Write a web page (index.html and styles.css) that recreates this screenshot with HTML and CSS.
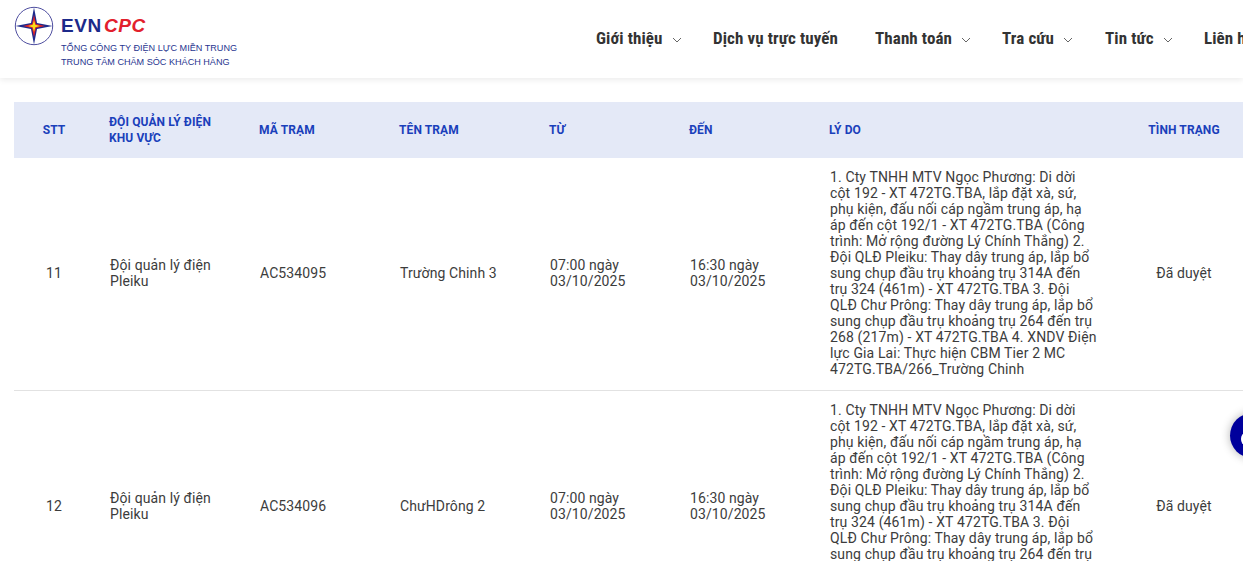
FILE: index.html
```html
<!DOCTYPE html>
<html lang="vi">
<head>
<meta charset="utf-8">
<title>EVNCPC</title>
<link rel="stylesheet" href="styles.css">
</head>
<body>
<header class="site-header">
  <a class="brand" href="#">
    <svg class="brand-mark" viewBox="0 0 40 40" width="40" height="40" aria-hidden="true">
      <circle cx="20" cy="20" r="18.7" fill="#fff" stroke="#3a3a94" stroke-width="0.9"/>
      <polygon points="20,1.5 23,17 38.5,20 23,23 20,38.5 17,23 1.5,20 17,17" fill="#1d2a8c"/>
      <polygon points="20,9 22,18 31,20 22,22 20,31 18,22 9,20 18,18" fill="#e0202a"/>
      <polygon points="20,14 21.3,18.7 26,20 21.3,21.3 20,26 18.7,21.3 14,20 18.7,18.7" fill="#f7e017"/>
    </svg>
    <div class="brand-text">
      <div class="brand-name"><span class="evn">EVN</span><span class="cpc">CPC</span></div>
      <div class="brand-sub">TỔNG CÔNG TY ĐIỆN LỰC MIỀN TRUNG</div>
      <div class="brand-sub">TRUNG TÂM CHĂM SÓC KHÁCH HÀNG</div>
    </div>
  </a>
  <nav class="main-nav">
    <a class="nav-item nav-gioithieu" href="#"><span class="nav-label">Giới thiệu</span><svg class="chev" viewBox="0 0 10 6" width="10" height="6"><path d="M1 1l4 4 4-4" fill="none" stroke="#666" stroke-width="1"/></svg></a>
    <a class="nav-item nav-dichvu" href="#"><span class="nav-label">Dịch vụ trực tuyến</span></a>
    <a class="nav-item nav-thanhtoan" href="#"><span class="nav-label">Thanh toán</span><svg class="chev" viewBox="0 0 10 6" width="10" height="6"><path d="M1 1l4 4 4-4" fill="none" stroke="#666" stroke-width="1"/></svg></a>
    <a class="nav-item nav-tracuu" href="#"><span class="nav-label">Tra cứu</span><svg class="chev" viewBox="0 0 10 6" width="10" height="6"><path d="M1 1l4 4 4-4" fill="none" stroke="#666" stroke-width="1"/></svg></a>
    <a class="nav-item nav-tintuc" href="#"><span class="nav-label">Tin tức</span><svg class="chev" viewBox="0 0 10 6" width="10" height="6"><path d="M1 1l4 4 4-4" fill="none" stroke="#666" stroke-width="1"/></svg></a>
    <a class="nav-item" href="#"><span class="nav-label">Liên hệ</span></a>
  </nav>
</header>
<main class="content">
  <table class="outage-table">
    <colgroup>
      <col class="c-stt"><col class="c-doi"><col class="c-ma"><col class="c-ten"><col class="c-tu"><col class="c-den"><col class="c-lydo"><col class="c-tt">
    </colgroup>
    <thead>
      <tr>
        <th class="center">STT</th>
        <th>ĐỘI QUẢN LÝ ĐIỆN KHU VỰC</th>
        <th>MÃ TRẠM</th>
        <th>TÊN TRẠM</th>
        <th>TỪ</th>
        <th>ĐẾN</th>
        <th>LÝ DO</th>
        <th class="center">TÌNH TRẠNG</th>
      </tr>
    </thead>
    <tbody>
      <tr>
        <td class="center">11</td>
        <td>Đội quản lý điện Pleiku</td>
        <td>AC534095</td>
        <td>Trường Chinh 3</td>
        <td>07:00 ngày 03/10/2025</td>
        <td>16:30 ngày 03/10/2025</td>
        <td class="reason">1. Cty TNHH MTV Ngọc Phương: Di dời cột 192 - XT 472TG.TBA, lắp đặt xà, sứ, phụ kiện, đấu nối cáp ngầm trung áp, hạ áp đến cột 192/1 - XT 472TG.TBA (Công trình: Mở rộng đường Lý Chính Thắng) 2. Đội QLĐ Pleiku: Thay dây trung áp, lắp bổ sung chụp đầu trụ khoảng trụ 314A đến trụ 324 (461m) - XT 472TG.TBA 3. Đội QLĐ Chư Prông: Thay dây trung áp, lắp bổ sung chụp đầu trụ khoảng trụ 264 đến trụ 268 (217m) - XT 472TG.TBA 4. XNDV Điện lực Gia Lai: Thực hiện CBM Tier 2 MC 472TG.TBA/266_Trường Chinh</td>
        <td class="center">Đã duyệt</td>
      </tr>
      <tr>
        <td class="center">12</td>
        <td>Đội quản lý điện Pleiku</td>
        <td>AC534096</td>
        <td>ChưHDrông 2</td>
        <td>07:00 ngày 03/10/2025</td>
        <td>16:30 ngày 03/10/2025</td>
        <td class="reason">1. Cty TNHH MTV Ngọc Phương: Di dời cột 192 - XT 472TG.TBA, lắp đặt xà, sứ, phụ kiện, đấu nối cáp ngầm trung áp, hạ áp đến cột 192/1 - XT 472TG.TBA (Công trình: Mở rộng đường Lý Chính Thắng) 2. Đội QLĐ Pleiku: Thay dây trung áp, lắp bổ sung chụp đầu trụ khoảng trụ 314A đến trụ 324 (461m) - XT 472TG.TBA 3. Đội QLĐ Chư Prông: Thay dây trung áp, lắp bổ sung chụp đầu trụ khoảng trụ 264 đến trụ 268 (217m) - XT 472TG.TBA 4. XNDV Điện lực Gia Lai: Thực hiện CBM Tier 2 MC 472TG.TBA/266_Trường Chinh</td>
        <td class="center">Đã duyệt</td>
      </tr>
    </tbody>
  </table>
</main>
<a class="chat-fab" href="#" aria-label="Chat"><span class="chat-mark"></span></a>
</body>
</html>
```
FILE: styles.css
```css
* { box-sizing: border-box; }
html, body { height: 100%; }
body {
  margin: 0;
  overflow: hidden;
  background: #fff;
  font-family: Roboto, "Liberation Sans", sans-serif;
  color: #333;
}
a { text-decoration: none; color: inherit; }

.site-header {
  display: flex;
  align-items: flex-start;
  height: 78px;
  padding-left: 14px;
  background: #fff;
  box-shadow: 0 2px 6px rgba(0, 0, 0, 0.08);
  position: relative;
}
.brand { display: flex; flex: none; width: 582px; padding-top: 6px; }
.brand-mark { flex: none; margin-right: 7px; }
.brand-text { padding-top: 10px; }
.brand-name {
  font-family: "Liberation Sans", sans-serif;
  font-weight: 700;
  font-size: 19px;
  line-height: 20px;
  height: 25px;
}
.evn { color: #1c2a8a; letter-spacing: 0.6px; }
.cpc { color: #e2202c; font-style: italic; letter-spacing: 0.6px; margin-left: 2px; }
.brand-sub {
  font-family: "Liberation Sans", sans-serif;
  font-size: 9.1px;
  line-height: 14px;
  color: #27358f;
  white-space: nowrap;
}

.main-nav {
  display: flex;
  flex: none;
  padding-top: 29px;
  font-size: 17px;
  line-height: 19px;
  font-weight: 700;
  color: #333;
  white-space: nowrap;
}
.nav-item { display: flex; align-items: center; flex: none; }
.nav-label { font-stretch: condensed; letter-spacing: 0.1px; }
.chev { margin-left: 9px; margin-top: 3px; }
.nav-gioithieu { width: 117px; }
.nav-dichvu { width: 162px; }
.nav-thanhtoan { width: 127px; }
.nav-tracuu { width: 103px; }
.nav-tintuc { width: 99px; }

.content { padding: 24px 0 0 14px; }
.outage-table {
  width: 1240px;
  table-layout: fixed;
  border-collapse: collapse;
  font-size: 14px;
  line-height: 16px;
  letter-spacing: 0.1px;
}
.c-stt { width: 80px; }
.c-doi { width: 150px; }
.c-ma { width: 140px; }
.c-ten { width: 150px; }
.c-tu { width: 140px; }
.c-den { width: 140px; }
.c-lydo { width: 300px; }
.c-tt { width: 140px; }

.outage-table th {
  height: 56px;
  padding: 12px 15px;
  background: #e4e9f7;
  color: #1a40bb;
  font-size: 12px;
  font-weight: 700;
  text-align: left;
  vertical-align: middle;
}
.outage-table td {
  padding: 11px 16px 13px;
  border-bottom: 1px solid #e2e2e2;
  color: #3c3c3c;
  vertical-align: middle;
}
.outage-table .reason { letter-spacing: 0.13px; padding-right: 15px; }
.outage-table .center { text-align: center; }

.chat-fab {
  position: fixed;
  left: 1230px;
  top: 413px;
  width: 45px;
  height: 45px;
  border-radius: 50%;
  background: #00009c;
  box-shadow: 0 0 10px rgba(0, 0, 0, 0.3);
}
.chat-mark {
  position: absolute;
  left: 11px;
  top: 20px;
  width: 8px;
  height: 12px;
  border-radius: 50%;
  background: #fff;
}
```
